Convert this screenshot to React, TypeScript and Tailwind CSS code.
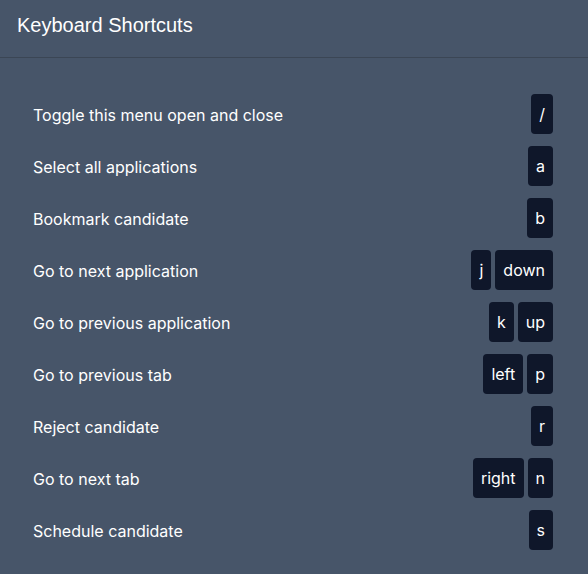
const shortcuts: { label: string; keys: string[] }[] = [
  { label: 'Toggle this menu open and close', keys: ['/'] },
  { label: 'Select all applications', keys: ['a'] },
  { label: 'Bookmark candidate', keys: ['b'] },
  { label: 'Go to next application', keys: ['j', 'down'] },
  { label: 'Go to previous application', keys: ['k', 'up'] },
  { label: 'Go to previous tab', keys: ['left', 'p'] },
  { label: 'Reject candidate', keys: ['r'] },
  { label: 'Go to next tab', keys: ['right', 'n'] },
  { label: 'Schedule candidate', keys: ['s'] },
]

function Key({ k }: { k: string }) {
  return (
    <kbd className="h-10 px-2 flex items-center justify-center rounded bg-[#0f172a] text-white text-base font-[Inter,sans-serif]">
      {k}
    </kbd>
  )
}

export default function App() {
  return (
    <div className="w-[588px] h-[574px] bg-[#475569] overflow-hidden">
      <div className="px-[17px] pt-[11px] pb-[18px] border-b border-[#3b4655]">
        <h1 className="text-xl leading-7 text-white font-['Liberation_Sans',Arial,sans-serif]">Keyboard Shortcuts</h1>
      </div>
      <div className="pl-[33px] pr-[35px] pt-9 flex flex-col gap-3">
        {shortcuts.map(({ label, keys }) => (
          <div key={label} className="flex items-center justify-between h-10">
            <span className="text-base text-white font-[Inter,sans-serif] translate-y-px">{label}</span>
            <div className="flex gap-1">
              {keys.map((k) => (
                <Key key={k} k={k} />
              ))}
            </div>
          </div>
        ))}
      </div>
    </div>
  )
}
